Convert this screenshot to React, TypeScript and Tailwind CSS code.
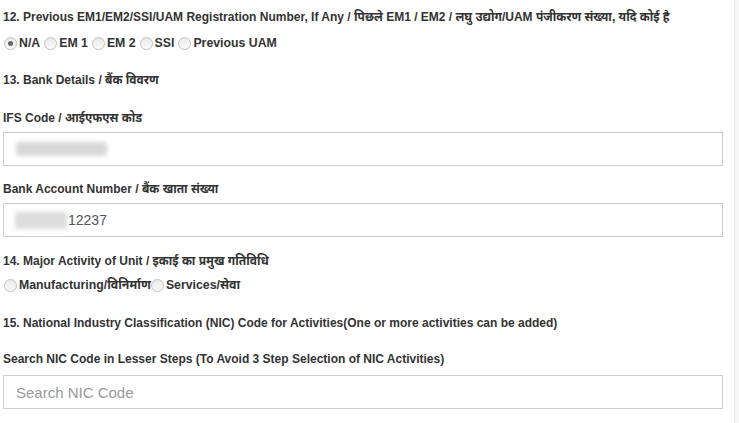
import React from "react";

const font = { fontFamily: '"Liberation Sans", Arial, "Noto Sans", sans-serif' };

function Radio({ checked }: { checked?: boolean }) {
  return (
    <span className="relative inline-block h-[13px] w-[13px] shrink-0 rounded-full border border-[#c2c2c2] bg-gradient-to-b from-[#e9e9e9] to-[#fafafa]">
      {checked ? (
        <span className="absolute left-[3px] top-[3px] h-[5px] w-[5px] rounded-full bg-[#666]" />
      ) : null}
    </span>
  );
}

function Opt({ label, checked }: { label: string; checked?: boolean }) {
  return (
    <label className="flex items-center gap-[2px]">
      <Radio checked={checked} />
      <span>{label}</span>
    </label>
  );
}

export default function App() {
  return (
    <div className="flex h-[423px] w-[739px] overflow-hidden bg-white text-[#333]" style={font}>
      <div className="flex-1 pl-[3px] pr-[11px]">
        <p className="mt-[10px] text-[12px] font-bold leading-[14px]">
          12. Previous EM1/EM2/SSI/UAM Registration Number, If Any / पिछले EM1 / EM2 / लघु उद्योग/UAM पंजीकरण संख्या, यदि कोई है
        </p>
        <div className="mt-[12px] flex items-center gap-[4px] pl-[1px] text-[12.3px] font-bold leading-[15px]">
          <Opt label="N/A" checked />
          <Opt label="EM 1" />
          <Opt label="EM 2" />
          <Opt label="SSI" />
          <Opt label="Previous UAM" />
        </div>

        <p className="mt-[22px] text-[12px] font-bold leading-[14px]">13. Bank Details / बैंक विवरण</p>

        <p className="mt-[24px] text-[12px] font-bold leading-[14px]">IFS Code / आईएफएस कोड</p>
        <div className="mt-[7px] flex h-[34px] items-center border border-[#ccc] px-[12px]">
          <span className="h-[14px] w-[91px] rounded-sm bg-[#d8d8d8] blur-[2px]" />
        </div>

        <p className="mt-[16px] text-[12px] font-bold leading-[14px]">Bank Account Number / बैंक खाता संख्या</p>
        <div className="mt-[7px] flex h-[34px] items-center border border-[#ccc] pl-[11px] text-[14px] text-[#555]">
          <span className="mr-[1px] h-[17px] w-[52px] bg-[#dcdcdc] blur-[2px]" />
          <span>12237</span>
        </div>

        <p className="mt-[17px] text-[12px] font-bold leading-[14px]">14. Major Activity of Unit / इकाई का प्रमुख गतिविधि</p>
        <div className="mt-[10px] flex items-center pl-[1px] text-[12.3px] font-bold leading-[15px]">
          <Opt label="Manufacturing/विनिर्माण" />
          <Opt label="Services/सेवा" />
        </div>

        <p className="mt-[23px] text-[12px] font-bold leading-[14px]">
          15. National Industry Classification (NIC) Code for Activities(One or more activities can be added)
        </p>
        <p className="mt-[22px] text-[12px] font-bold leading-[14px]">
          Search NIC Code in Lesser Steps (To Avoid 3 Step Selection of NIC Activities)
        </p>
        <input
          className="mt-[9px] block h-[34px] w-full border border-[#ccc] px-[12px] text-[15px] text-[#555] outline-none placeholder:text-[#999]"
          style={font}
          placeholder="Search NIC Code"
        />
      </div>
      <div className="w-[5px] border-l border-[#ececec] bg-[#f6f6f6]" />
    </div>
  );
}
